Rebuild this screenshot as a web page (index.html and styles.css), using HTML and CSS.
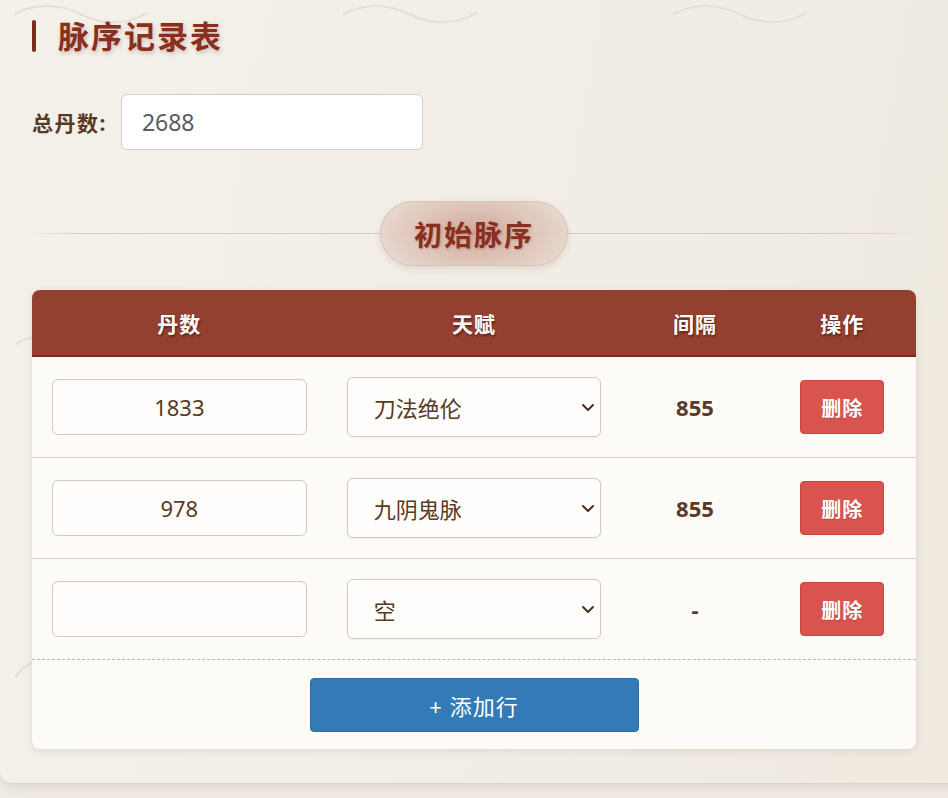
FILE: index.html
```html
<!DOCTYPE html>
<html lang="zh">
<head>
<meta charset="utf-8">
<title>脉序记录表</title>
<link rel="stylesheet" href="styles.css">
</head>
<body>
<div class="page">
  <svg class="deco" width="1000" height="800" viewBox="0 0 1000 800" aria-hidden="true">
    <g fill="none" stroke="#e6dfd5" stroke-width="2" stroke-linecap="round">
      <path d="M15 14 C35 3 60 4 80 14 S125 26 147 13"/>
      <path d="M344 14 C364 3 389 4 409 14 S454 26 476 13"/>
      <path d="M674 14 C694 3 719 4 739 14 S784 26 806 13"/>
      <path d="M16 344 C22 340 28 338 34 337"/>
      <path d="M16 676 C22 668 28 664 34 662"/>
    </g>
  </svg>
  <div class="content">
    <div class="title-row">
      <span class="title-bar"></span>
      <h1 class="title">脉序记录表</h1>
    </div>
    <div class="field-row">
      <label class="field-label">总丹数:</label>
      <input class="total-input" type="text" value="2688">
    </div>
    <div class="section">
      <div class="section-pill">初始脉序</div>
    </div>
    <div class="card">
      <div class="grid head">
        <div class="th">丹数</div>
        <div class="th">天赋</div>
        <div class="th">间隔</div>
        <div class="th">操作</div>
      </div>
      <div class="grid row">
        <div class="cell"><input class="num-input" type="text" value="1833"></div>
        <div class="cell"><div class="select-wrap"><select class="sel"><option>刀法绝伦</option></select><svg class="chev" width="14" height="9" viewBox="0 0 14 9"><path d="M2 2 L7 7 L12 2" fill="none" stroke="#4a3020" stroke-width="2" stroke-linecap="round" stroke-linejoin="round"/></svg></div></div>
        <div class="cell gap-val">855</div>
        <div class="cell"><button class="del">删除</button></div>
      </div>
      <div class="grid row">
        <div class="cell"><input class="num-input" type="text" value="978"></div>
        <div class="cell"><div class="select-wrap"><select class="sel"><option>九阴鬼脉</option></select><svg class="chev" width="14" height="9" viewBox="0 0 14 9"><path d="M2 2 L7 7 L12 2" fill="none" stroke="#4a3020" stroke-width="2" stroke-linecap="round" stroke-linejoin="round"/></svg></div></div>
        <div class="cell gap-val">855</div>
        <div class="cell"><button class="del">删除</button></div>
      </div>
      <div class="grid row last">
        <div class="cell"><input class="num-input" type="text" value=""></div>
        <div class="cell"><div class="select-wrap"><select class="sel"><option>空</option></select><svg class="chev" width="14" height="9" viewBox="0 0 14 9"><path d="M2 2 L7 7 L12 2" fill="none" stroke="#4a3020" stroke-width="2" stroke-linecap="round" stroke-linejoin="round"/></svg></div></div>
        <div class="cell gap-val">-</div>
        <div class="cell"><button class="del">删除</button></div>
      </div>
      <div class="add-area">
        <button class="add-btn">+ 添加行</button>
      </div>
    </div>
  </div>
</div>
</body>
</html>
```
FILE: styles.css
```css
html, body {
  margin: 0;
  padding: 0;
}
body {
  background: #f1ede6;
  overflow: hidden;
  height: 798px;
  font-family: "Noto Sans", "Noto Sans CJK SC", sans-serif;
  color: #5a3a24;
}
.page {
  position: relative;
  margin-top: -12px;
  width: 1000px;
  height: 796px;
  box-sizing: border-box;
  padding: 32px 0 0 32px;
  border-radius: 12px;
  background: linear-gradient(100deg, #f4f0ea 0%, #f2eee7 50%, #efe9df 100%);
  box-shadow: 0 4px 14px rgba(90, 60, 30, 0.12);
  border-bottom: 1px solid #ddd5ca;
}
.deco {
  position: absolute;
  left: 0;
  top: 12px;
  pointer-events: none;
}
.content {
  position: relative;
  width: 884px;
}
.title-row {
  display: flex;
  align-items: center;
  height: 32px;
  gap: 22px;
}
.title-bar {
  width: 4px;
  height: 32px;
  border-radius: 2px;
  background: #7b2c1c;
}
.title {
  margin: 0;
  font-size: 31px;
  line-height: 32px;
  font-weight: 700;
  letter-spacing: 2px;
  color: #8a2e1e;
  text-shadow: 1px 2px 4px rgba(120, 60, 30, 0.3);
}
.field-row {
  display: flex;
  align-items: center;
  gap: 14px;
  margin-top: 42px;
}
.field-label {
  font-size: 21px;
  font-weight: 700;
  color: #5a3a24;
  letter-spacing: 1.5px;
}
.total-input {
  width: 302px;
  height: 56px;
  box-sizing: border-box;
  border: 1px solid #d6cec3;
  border-radius: 6px;
  background: #fff;
  padding: 0 20px;
  font-family: "Noto Sans", "Noto Sans CJK SC", sans-serif;
  font-size: 23px;
  color: #5c5c5c;
  outline: none;
}
.section {
  margin-top: 51px;
  display: flex;
  justify-content: center;
  align-items: center;
  height: 65px;
  background: linear-gradient(90deg, rgba(210, 195, 180, 0) 0%, #d9cec2 5%, #d9cec2 95%, rgba(210, 195, 180, 0) 100%) center / 100% 1px no-repeat;
}
.section-pill {
  height: 65px;
  box-sizing: border-box;
  padding: 0 33px;
  display: flex;
  align-items: center;
  border-radius: 33px;
  border: 1px solid #d4c4b8;
  background: radial-gradient(ellipse 60% 90% at center, rgba(205, 160, 146, 0.9) 0%, rgba(222, 196, 184, 0.85) 60%, rgba(234, 222, 212, 0.85) 100%);
  box-shadow: 0 3px 7px rgba(120, 80, 50, 0.15);
  font-size: 28px;
  font-weight: 700;
  letter-spacing: 2px;
  color: #8a2e1e;
  text-shadow: 1px 1px 2px rgba(120, 60, 30, 0.3);
}
.card {
  margin-top: 24px;
  border-radius: 8px;
  overflow: hidden;
  background: #fdfbf8;
  box-shadow: 0 2px 8px rgba(90, 60, 30, 0.12);
}
.grid {
  display: grid;
  grid-template-columns: 2fr 2fr 1fr 1fr;
}
.head {
  height: 65px;
  background: #944030;
  border-bottom: 2px solid #7b2b1e;
  align-items: center;
}
.th {
  text-align: center;
  font-size: 21px;
  font-weight: 700;
  color: #fff;
  letter-spacing: 1px;
  text-shadow: 1px 2px 2px rgba(40, 10, 0, 0.45);
}
.row {
  height: 100px;
  border-bottom: 1px solid #d8d0c5;
  align-items: center;
}
.row.last {
  border-bottom: 1px dashed #bfb6ab;
}
.cell {
  display: flex;
  justify-content: center;
  align-items: center;
  padding: 0 20px;
}
.num-input {
  width: 100%;
  height: 56px;
  box-sizing: border-box;
  border: 1px solid #d3cbc0;
  border-radius: 6px;
  background: #fffefc;
  box-shadow: inset 0 1px 2px rgba(0, 0, 0, 0.04);
  text-align: center;
  font-family: "Noto Sans", "Noto Sans CJK SC", sans-serif;
  font-size: 22px;
  color: #5a3a24;
  outline: none;
}
.select-wrap {
  position: relative;
  width: 100%;
}
.sel {
  appearance: none;
  -webkit-appearance: none;
  width: 100%;
  height: 60px;
  box-sizing: border-box;
  border: 1px solid #d3cbc0;
  border-radius: 6px;
  background: #fffefc;
  box-shadow: 0 1px 3px rgba(0, 0, 0, 0.05);
  padding: 0 26px;
  font-family: "Noto Sans CJK SC", "Noto Sans", sans-serif;
  font-size: 22px;
  color: #5a3a24;
  outline: none;
}
.chev {
  position: absolute;
  right: 6px;
  top: 26px;
  pointer-events: none;
}
.gap-val {
  font-size: 22px;
  font-weight: 700;
  color: #5a3a24;
}
.del {
  width: 84px;
  height: 54px;
  border: 1px solid #c9433f;
  border-radius: 4px;
  background: #d9534f;
  color: #fff;
  font-family: "Noto Sans CJK SC", "Noto Sans", sans-serif;
  font-size: 20px;
  font-weight: 700;
  letter-spacing: 1px;
  text-shadow: 0 1px 1px rgba(0, 0, 0, 0.15);
}
.add-area {
  display: flex;
  justify-content: center;
  padding: 18px 0 17px;
}
.add-btn {
  width: 329px;
  height: 54px;
  border: 1px solid #2e6da4;
  border-radius: 4px;
  background: #337ab7;
  color: #fff;
  font-family: "Noto Sans", "Noto Sans CJK SC", sans-serif;
  font-size: 22px;
  letter-spacing: 1px;
}
```
